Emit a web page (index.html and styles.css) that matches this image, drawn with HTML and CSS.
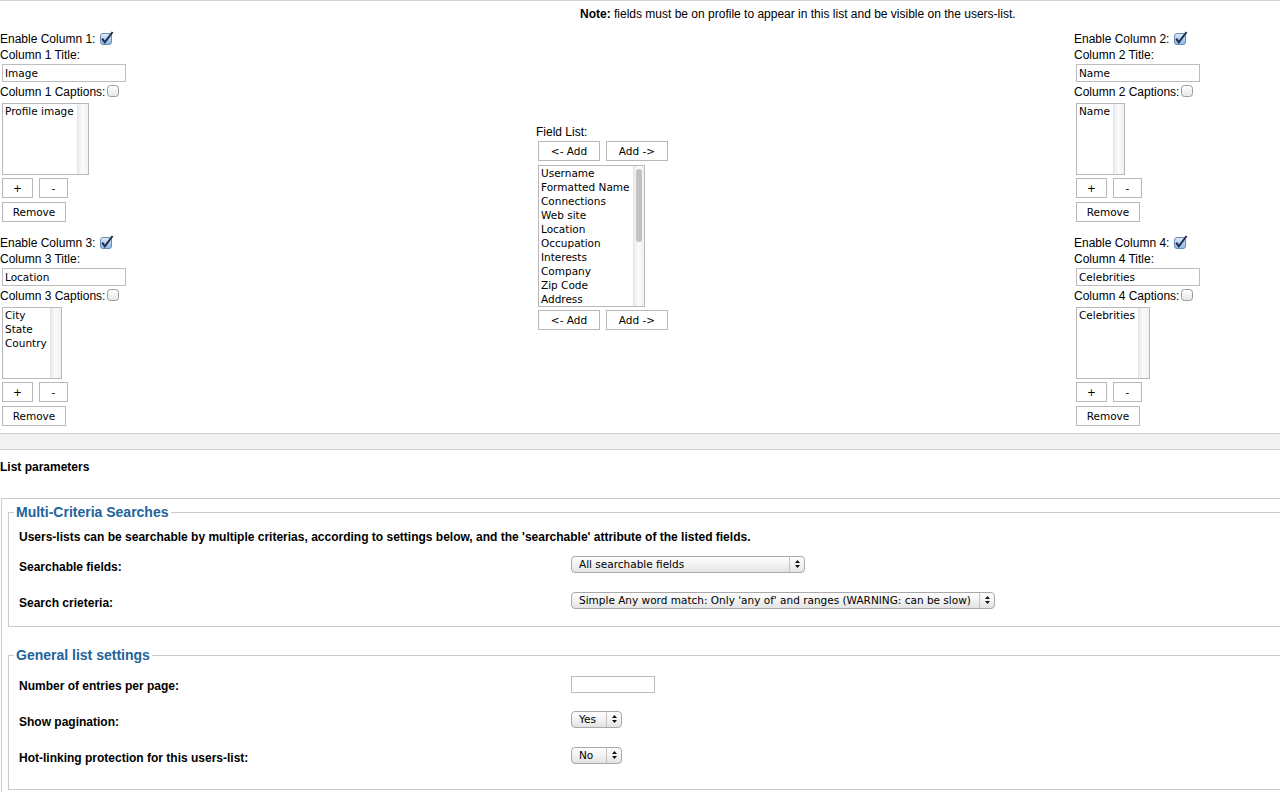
FILE: index.html
```html
<!DOCTYPE html>
<html lang="en">
<head>
<meta charset="UTF-8" />
<meta name="viewport" content="width=device-width, initial-scale=1" />
<title>Users-list settings</title>
<link rel="stylesheet" href="styles.css">
</head>
<body>

<svg class="defs" aria-hidden="true">
  <defs>
    <linearGradient id="cb-on" x1="0" y1="0" x2="0" y2="1">
      <stop offset="0" stop-color="#e3eefb" />
      <stop offset="0.5" stop-color="#b3cff0" />
      <stop offset="1" stop-color="#8fb8e6" />
    </linearGradient>
    <linearGradient id="cb-off" x1="0" y1="0" x2="0" y2="1">
      <stop offset="0" stop-color="#ffffff" />
      <stop offset="1" stop-color="#e6e6e6" />
    </linearGradient>
  </defs>
</svg>

<div class="fields-area">
  <p class="note"><b>Note:</b> fields must be on profile to appear in this list and be visible on the users-list.</p>

  <div class="columns">

    <div class="col col-1">
      <div class="lbl">Enable Column 1: <svg class="cb" width="15" height="15" viewBox="0 0 15 15"><rect x="1.5" y="2.5" width="11" height="11" rx="2.5" fill="url(#cb-on)" stroke="#6a8bb3" /><path d="M3.2 7.6 L5.8 11.4 L13.6 1" fill="none" stroke="#1d2d4d" stroke-width="2" /></svg></div>
      <div class="lbl">Column 1 Title:</div>
      <input class="txt" type="text" value="Image" />
      <div class="lbl cap">Column 1 Captions:<svg class="cb-off" width="13" height="13" viewBox="0 0 13 13"><rect x="0.5" y="0.5" width="11" height="11" rx="3" fill="url(#cb-off)" stroke="#9a9a9a" /></svg></div>
      <div class="listbox">
        <div class="opts"><div>Profile image</div></div>
        <div class="track"></div>
      </div>
      <div class="pm"><button class="plus">+</button><button class="minus">-</button></div>
      <button class="rm">Remove</button>
    </div>

    <div class="fieldlist">
      <div class="lbl">Field List:</div>
      <div class="addrow"><button class="add">&lt;- Add</button><button class="add">Add -&gt;</button></div>
      <div class="listbox tall">
        <div class="opts">
          <div>Username</div>
          <div>Formatted Name</div>
          <div>Connections</div>
          <div>Web site</div>
          <div>Location</div>
          <div>Occupation</div>
          <div>Interests</div>
          <div>Company</div>
          <div>Zip Code</div>
          <div>Address</div>
        </div>
        <div class="track"><div class="thumb"></div></div>
      </div>
      <div class="addrow bottom"><button class="add">&lt;- Add</button><button class="add">Add -&gt;</button></div>
    </div>

    <div class="col col-2">
      <div class="lbl">Enable Column 2: <svg class="cb" width="15" height="15" viewBox="0 0 15 15"><rect x="1.5" y="2.5" width="11" height="11" rx="2.5" fill="url(#cb-on)" stroke="#6a8bb3" /><path d="M3.2 7.6 L5.8 11.4 L13.6 1" fill="none" stroke="#1d2d4d" stroke-width="2" /></svg></div>
      <div class="lbl">Column 2 Title:</div>
      <input class="txt" type="text" value="Name" />
      <div class="lbl cap">Column 2 Captions:<svg class="cb-off" width="13" height="13" viewBox="0 0 13 13"><rect x="0.5" y="0.5" width="11" height="11" rx="3" fill="url(#cb-off)" stroke="#9a9a9a" /></svg></div>
      <div class="listbox">
        <div class="opts"><div>Name</div></div>
        <div class="track"></div>
      </div>
      <div class="pm"><button class="plus">+</button><button class="minus">-</button></div>
      <button class="rm">Remove</button>
    </div>

    <div class="col col-3">
      <div class="lbl">Enable Column 3: <svg class="cb" width="15" height="15" viewBox="0 0 15 15"><rect x="1.5" y="2.5" width="11" height="11" rx="2.5" fill="url(#cb-on)" stroke="#6a8bb3" /><path d="M3.2 7.6 L5.8 11.4 L13.6 1" fill="none" stroke="#1d2d4d" stroke-width="2" /></svg></div>
      <div class="lbl">Column 3 Title:</div>
      <input class="txt" type="text" value="Location" />
      <div class="lbl cap">Column 3 Captions:<svg class="cb-off" width="13" height="13" viewBox="0 0 13 13"><rect x="0.5" y="0.5" width="11" height="11" rx="3" fill="url(#cb-off)" stroke="#9a9a9a" /></svg></div>
      <div class="listbox">
        <div class="opts"><div>City</div><div>State</div><div>Country</div></div>
        <div class="track"></div>
      </div>
      <div class="pm"><button class="plus">+</button><button class="minus">-</button></div>
      <button class="rm">Remove</button>
    </div>

    <div class="col col-4">
      <div class="lbl">Enable Column 4: <svg class="cb" width="15" height="15" viewBox="0 0 15 15"><rect x="1.5" y="2.5" width="11" height="11" rx="2.5" fill="url(#cb-on)" stroke="#6a8bb3" /><path d="M3.2 7.6 L5.8 11.4 L13.6 1" fill="none" stroke="#1d2d4d" stroke-width="2" /></svg></div>
      <div class="lbl">Column 4 Title:</div>
      <input class="txt" type="text" value="Celebrities" />
      <div class="lbl cap">Column 4 Captions:<svg class="cb-off" width="13" height="13" viewBox="0 0 13 13"><rect x="0.5" y="0.5" width="11" height="11" rx="3" fill="url(#cb-off)" stroke="#9a9a9a" /></svg></div>
      <div class="listbox">
        <div class="opts"><div>Celebrities</div></div>
        <div class="track"></div>
      </div>
      <div class="pm"><button class="plus">+</button><button class="minus">-</button></div>
      <button class="rm">Remove</button>
    </div>

  </div>
</div>

<div class="band"></div>

<h3 class="params-title">List parameters</h3>

<div class="params">
  <fieldset>
    <legend>Multi-Criteria Searches</legend>
    <div class="desc">Users-lists can be searchable by multiple criterias, according to settings below, and the 'searchable' attribute of the listed fields.</div>
    <div class="frow">
      <span>Searchable fields:</span>
      <span class="sel sel-fields"><select><option>All searchable fields</option></select><span class="arr"><svg width="5" height="8" viewBox="0 0 5 8"><path d="M0 3 L2.5 0 L5 3 Z M0 5 L2.5 8 L5 5 Z" /></svg></span></span>
    </div>
    <div class="frow">
      <span>Search crieteria:</span>
      <span class="sel sel-crit"><select><option>Simple Any word match: Only 'any of' and ranges (WARNING: can be slow)</option></select><span class="arr"><svg width="5" height="8" viewBox="0 0 5 8"><path d="M0 3 L2.5 0 L5 3 Z M0 5 L2.5 8 L5 5 Z" /></svg></span></span>
    </div>
  </fieldset>

  <fieldset class="general">
    <legend>General list settings</legend>
    <div class="rows">
      <div class="frow">
        <span>Number of entries per page:</span>
        <input class="num" type="text" value="" />
      </div>
      <div class="frow">
        <span>Show pagination:</span>
        <span class="sel sel-yn"><select><option>Yes</option><option>No</option></select><span class="arr"><svg width="5" height="8" viewBox="0 0 5 8"><path d="M0 3 L2.5 0 L5 3 Z M0 5 L2.5 8 L5 5 Z" /></svg></span></span>
      </div>
      <div class="frow">
        <span>Hot-linking protection for this users-list:</span>
        <span class="sel sel-yn"><select><option>No</option><option>Yes</option></select><span class="arr"><svg width="5" height="8" viewBox="0 0 5 8"><path d="M0 3 L2.5 0 L5 3 Z M0 5 L2.5 8 L5 5 Z" /></svg></span></span>
      </div>
    </div>
  </fieldset>
</div>

</body>
</html>
```

FILE: styles.css
```css
body {
  margin: 0;
  font-family: "Liberation Sans", Arial, sans-serif;
  font-size: 12px;
  color: #000;
  overflow-x: hidden;
}
.defs {
  position: absolute;
  width: 0; height: 0;
}

/* top: column editor */
.fields-area {
  border-top: 1px solid #d4d4d4;
}
.note {
  margin: 0;
  padding: 6px 0 9px 580px;
  line-height: 14px;
}
.columns {
  display: grid;
  grid-template-columns: 536px 538px 1fr;
  row-gap: 12px;
}
.col-1 { grid-column: 1; grid-row: 1; }
.col-2 { grid-column: 3; grid-row: 1; }
.col-3 { grid-column: 1; grid-row: 2; }
.col-4 { grid-column: 3; grid-row: 2; }
.fieldlist {
  grid-column: 2;
  grid-row: 1 / 3;
  align-self: center;
  margin-top: -3px;
}
.lbl {
  line-height: 16px;
  height: 15px;
  padding-top: 1px;
  white-space: nowrap;
}
.lbl.cap {
  line-height: 18px;
  height: 17px;
}
.cb {
  vertical-align: -3px;
}
.cb-off {
  vertical-align: -2px;
  margin-left: 2px;
}

.txt {
  display: block;
  margin: 2px 0 0 2px;
  width: 124px; height: 18px;
  box-sizing: border-box;
  border: 1px solid #bdbdbd;
  padding: 0 2px;
  font: 10.5px "DejaVu Sans", sans-serif;
  color: #000;
}

button {
  font: 10.5px "DejaVu Sans", sans-serif;
  color: #000;
  background: #fff;
  border: 1px solid #b8b8b8;
  height: 20px;
  padding: 0;
  box-sizing: border-box;
  border-radius: 0;
}

.listbox {
  display: flex;
  width: fit-content;
  height: 72px;
  box-sizing: border-box;
  margin: 3px 0 0 2px;
  border: 1px solid #b8b8b8;
  background: #fff;
}
.listbox.tall {
  height: 142px;
  margin-top: 4px;
}
.opts {
  padding: 0 3px 0 2px;
  font: 10.5px/14px "DejaVu Sans", sans-serif;
  white-space: nowrap;
  overflow: hidden;
}
.track {
  width: 10px;
  border-left: 1px solid #e4e4e4;
  background: linear-gradient(to right, #ececec, #fbfbfb 45%, #f1f1f1);
}
.thumb {
  width: 6px; height: 73px;
  margin: 3px auto 0;
  border-radius: 3px;
  background: #c2c2c2;
}

.pm {
  display: flex;
  gap: 6px;
  margin: 3px 0 0 2px;
}
.plus { width: 31px; }
.minus { width: 29px; }
.rm {
  display: block;
  width: 64px;
  margin: 4px 0 0 2px;
}

.addrow {
  display: flex;
  gap: 6px;
  margin: 2px 0 0 2px;
}
.addrow.bottom {
  margin-top: 3px;
}
.add { width: 62px; }

/* divider band */
.band {
  margin-top: 7px;
  height: 15px;
  background: #f2f2f2;
  border-top: 1px solid #cfcfcf;
  border-bottom: 1px solid #cfcfcf;
}
.params-title {
  margin: 10px 0 0;
  font-size: 12px;
  line-height: 14px;
}

/* list parameters */
.params {
  margin: 24px -40px 0 1px;
  border: 1px solid #cbcbcb;
  padding: 5px 0 20px 6px;
}
fieldset {
  margin: 0;
  border: 1px solid #cbcbcb;
  padding: 0 5px 6px;
}
legend {
  padding: 0 2px;
  font: bold 14px/16px "Liberation Sans", Arial, sans-serif;
  color: #22639b;
}
fieldset.general {
  margin-top: 20px;
  padding-bottom: 14px;
}
.general .rows {
  padding-top: 4px;
}
.desc {
  padding: 10px 0 4px 5px;
  line-height: 14px;
  font-weight: bold;
  white-space: nowrap;
}
.frow {
  display: grid;
  grid-template-columns: 552px auto;
  align-items: center;
  height: 36px;
  margin-left: 5px;
  font-weight: bold;
}
.frow > span:first-child {
  padding-top: 1px;
}

.num {
  justify-self: start;
  width: 84px; height: 17px;
  box-sizing: border-box;
  border: 1px solid #bdbdbd;
  margin-top: -2px;
}

.sel {
  justify-self: start;
  display: inline-flex;
  height: 17px;
  box-sizing: border-box;
  border: 1px solid #a9a9a9;
  border-radius: 4px;
  background: linear-gradient(#fefefe, #f2f2f2 50%, #e3e3e3);
  overflow: hidden;
  font-weight: normal;
  margin-top: -4px;
}
.sel select {
  -webkit-appearance: none;
  appearance: none;
  border: 0;
  margin: 0;
  background: transparent;
  font: 10.5px "DejaVu Sans", sans-serif;
  color: #000;
  height: 15px;
  line-height: 15px;
  padding: 0 0 0 7px;
}
.sel-fields select { width: 217px; }
.sel-crit select { width: 407px; }
.sel-yn select { width: 34px; }
.arr {
  width: 14px;
  border-left: 1px solid #c4c4c4;
  display: flex;
  align-items: center;
  justify-content: center;
}
.arr svg {
  fill: #111;
}
```
